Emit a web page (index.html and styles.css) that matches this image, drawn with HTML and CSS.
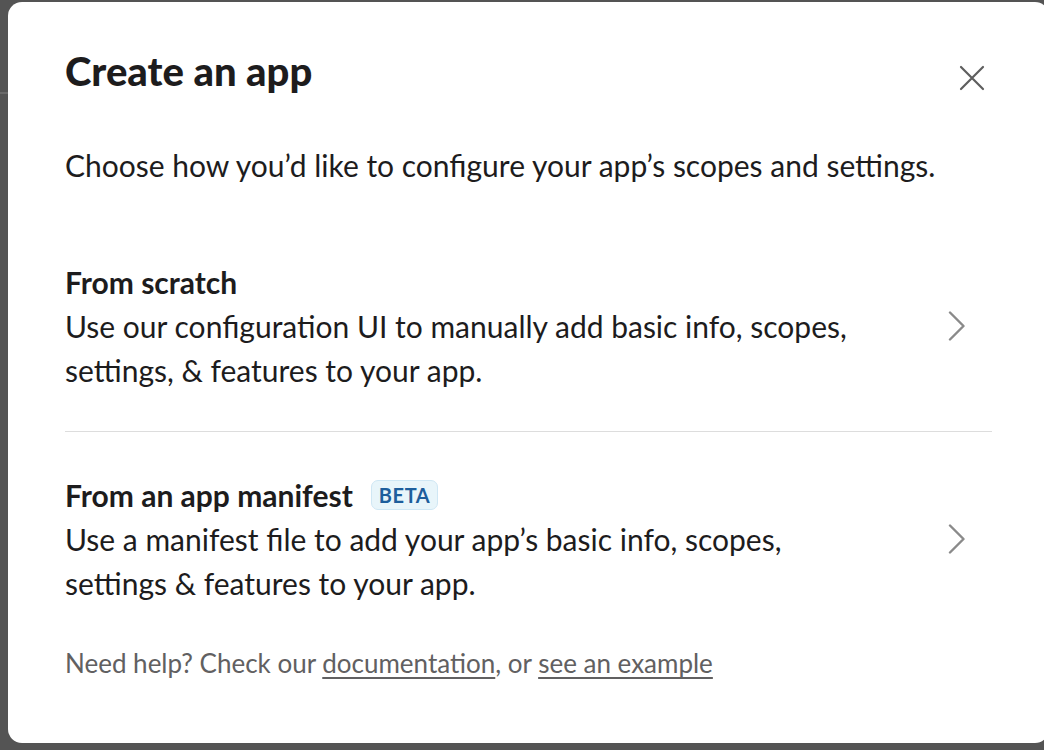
FILE: index.html
```html
<!DOCTYPE html>
<html lang="en">
<head>
<meta charset="utf-8">
<title>Create an app</title>
<link rel="stylesheet" href="styles.css">
</head>
<body>
<div class="modal" role="dialog" aria-labelledby="modal-title">
  <div class="modal-header">
    <h1 id="modal-title" class="modal-title">Create an app</h1>
    <button class="close-btn" aria-label="Close">
      <svg width="26" height="26" viewBox="0 0 26 26" aria-hidden="true"><path d="M2 2 L24 24 M24 2 L2 24" stroke="#5e5e5e" stroke-width="2.2" stroke-linecap="round" fill="none"/></svg>
    </button>
  </div>
  <p class="modal-desc">Choose how you’d like to configure your app’s scopes and settings.</p>
  <div class="options">
    <a class="option" href="#">
      <div class="option-text">
        <div class="option-title">From scratch</div>
        <div class="option-body">Use our configuration UI to manually add basic info, scopes, settings, &amp; features to your app.</div>
      </div>
      <svg class="chevron" width="18" height="30" viewBox="0 0 18 30" aria-hidden="true"><path d="M2 1.5 L15.5 15 L2 28.5" stroke="#8a8a8a" stroke-width="2.4" stroke-linecap="round" stroke-linejoin="round" fill="none"/></svg>
    </a>
    <a class="option" href="#">
      <div class="option-text">
        <div class="option-title">From an app manifest <span class="badge">BETA</span></div>
        <div class="option-body">Use a manifest file to add your app’s basic info, scopes, settings &amp; features to your app.</div>
      </div>
      <svg class="chevron" width="18" height="30" viewBox="0 0 18 30" aria-hidden="true"><path d="M2 1.5 L15.5 15 L2 28.5" stroke="#8a8a8a" stroke-width="2.4" stroke-linecap="round" stroke-linejoin="round" fill="none"/></svg>
    </a>
  </div>
  <p class="modal-footer">Need help? Check our <a href="#">documentation</a>, or <a href="#">see an example</a></p>
</div>
</body>
</html>
```
FILE: styles.css
```css
html, body {
  margin: 0;
  padding: 0;
  height: 100%;
  overflow: hidden;
}
body {
  background: linear-gradient(to bottom, #545454 0, #545454 92px, #6a6a6a 92px, #6a6a6a 94px, #545454 94px);
  font-family: Lato, "Noto Sans", sans-serif;
  color: #1d1c1d;
  padding-top: 2px;
  box-sizing: border-box;
}
.modal {
  margin-left: 8px;
  width: 1041px;
  height: 741px;
  background: #fff;
  border-radius: 14px;
  box-sizing: border-box;
  padding: 45px 57px 0 57px;
}
.modal-header {
  display: flex;
  align-items: center;
  justify-content: space-between;
}
.modal-title {
  margin: 0;
  font-size: 40px;
  line-height: 48px;
  font-weight: 900;
  letter-spacing: 0;
}
.close-btn {
  border: 0;
  background: none;
  padding: 0;
  margin-right: 7px;
  margin-top: 14px;
  width: 26px;
  height: 26px;
  display: flex;
}
.modal-desc {
  margin: 48px 0 0 0;
  font-size: 30px;
  line-height: 44px;
}
.options {
  margin-top: 33px;
}
.option {
  display: flex;
  align-items: center;
  justify-content: space-between;
  padding: 40px 0 39px;
  text-decoration: none;
  color: inherit;
}
.option + .option {
  border-top: 1px solid #dddddd;
  padding-top: 41px;
}
.option-text {
  max-width: 800px;
}
.option-title {
  font-size: 30px;
  line-height: 44px;
  font-weight: 700;
  display: flex;
  align-items: center;
  gap: 18px;
}
.option-body {
  font-size: 30px;
  line-height: 44px;
}
.chevron {
  margin-right: 26px;
}
.badge {
  font-size: 20px;
  line-height: 28px;
  font-weight: 700;
  color: #1d5e9c;
  background: #e8f5fa;
  border: 1px solid #cfe7f4;
  border-radius: 7px;
  padding: 0 7px;
  letter-spacing: 0.6px;
}
.modal-footer {
  margin: 0;
  font-size: 26px;
  line-height: 38px;
  color: #616061;
}
.modal-footer a {
  color: #616061;
  text-decoration: underline;
  text-underline-offset: 4px;
}
```
